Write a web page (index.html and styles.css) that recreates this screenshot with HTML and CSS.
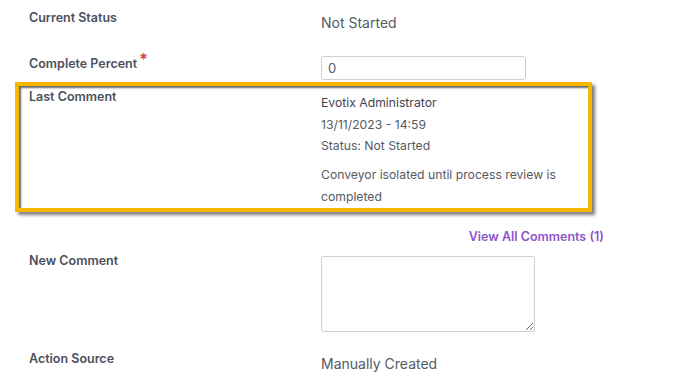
FILE: index.html
```html
<!DOCTYPE html>
<html lang="en">
<head>
  <meta charset="UTF-8" />
  <title>Action Details</title>
<link rel="stylesheet" href="styles.css">
</head>
<body>
  <div class="details">
    <div class="row row-status">
      <div class="label">Current Status</div>
      <div class="value">Not Started</div>
    </div>

    <div class="row row-percent">
      <div class="label">Complete Percent<span class="req">*</span></div>
      <div class="value"><input type="text" class="field" value="0"></div>
    </div>

    <div class="row row-comment highlight">
      <div class="label">Last Comment</div>
      <div class="value comment">
        <div class="author">Evotix Administrator</div>
        <div>13/11/2023 - 14:59</div>
        <div>Status: Not Started</div>
        <p class="comment-text">Conveyor isolated until process review is completed</p>
      </div>
    </div>

    <div class="view-all"><a href="#">View All Comments (1)</a></div>

    <div class="row row-new">
      <div class="label">New Comment</div>
      <div class="value"><textarea class="note"></textarea></div>
    </div>

    <div class="row row-source">
      <div class="label">Action Source</div>
      <div class="value">Manually Created</div>
    </div>
  </div>
</body>
</html>
```

FILE: styles.css
```css
/* Base Layout */
* {
  box-sizing: border-box;
}

body {
  margin: 0;
  background-color: #fff;
  font-family: Inter, 'Noto Sans', sans-serif;
  color: #555a63;
}

.details {
  width: 620px;
  padding-top: 9px;
}

/* Rows */
.row {
  display: grid;
  grid-template-columns: 292px 1fr;
  padding-left: 29px;
}

.label {
  font-size: 12.5px;
  font-weight: 600;
  line-height: 18px;
  color: #4b505c;
}

.value {
  font-size: 14px;
  line-height: 20px;
  padding-top: 4px;
}

.req {
  color: #e03a3a;
  font-size: 16px;
  position: relative;
  top: -3px;
  margin-left: 2px;
}

.row-percent {
  margin-top: 20px;
}

.row-percent .value {
  padding-top: 3px;
}

.field {
  width: 205px;
  height: 24px;
  border: 1px solid #cfcfcf;
  border-radius: 3px;
  padding: 0 6px;
  font-family: inherit;
  font-size: 13px;
  color: #555a63;
}

/* Highlighted comment */
.highlight {
  margin-left: 15px;
  margin-top: 2px;
  width: 577px;
  padding-left: 10px;
  padding-top: 2px;
  border: 4px solid #f7b600;
  box-shadow: inset 2px 2px 2px rgba(40, 40, 40, 0.7), 3px 3px 3px rgba(40, 40, 40, 0.6);
}

.comment {
  font-size: 12.2px;
  line-height: 21.5px;
  padding-top: 4px;
}

.author {
  font-weight: 400;
  color: #3f434c;
}

.comment-text {
  margin: 7px 0 0;
  width: 250px;
  line-height: 22px;
}

.view-all {
  width: 604px;
  text-align: right;
  margin-top: 14px;
  line-height: 18px;
}

.view-all a {
  color: #8d55c9;
  font-size: 12.5px;
  font-weight: 600;
  text-decoration: none;
}

.row-new {
  margin-top: 6px;
}

.note {
  width: 214px;
  height: 76px;
  border: 1px solid #cfcfcf;
  border-radius: 3px;
  display: block;
}

.row-new .value {
  padding-top: 4px;
}

.row-source {
  margin-top: 18px;
}
```
